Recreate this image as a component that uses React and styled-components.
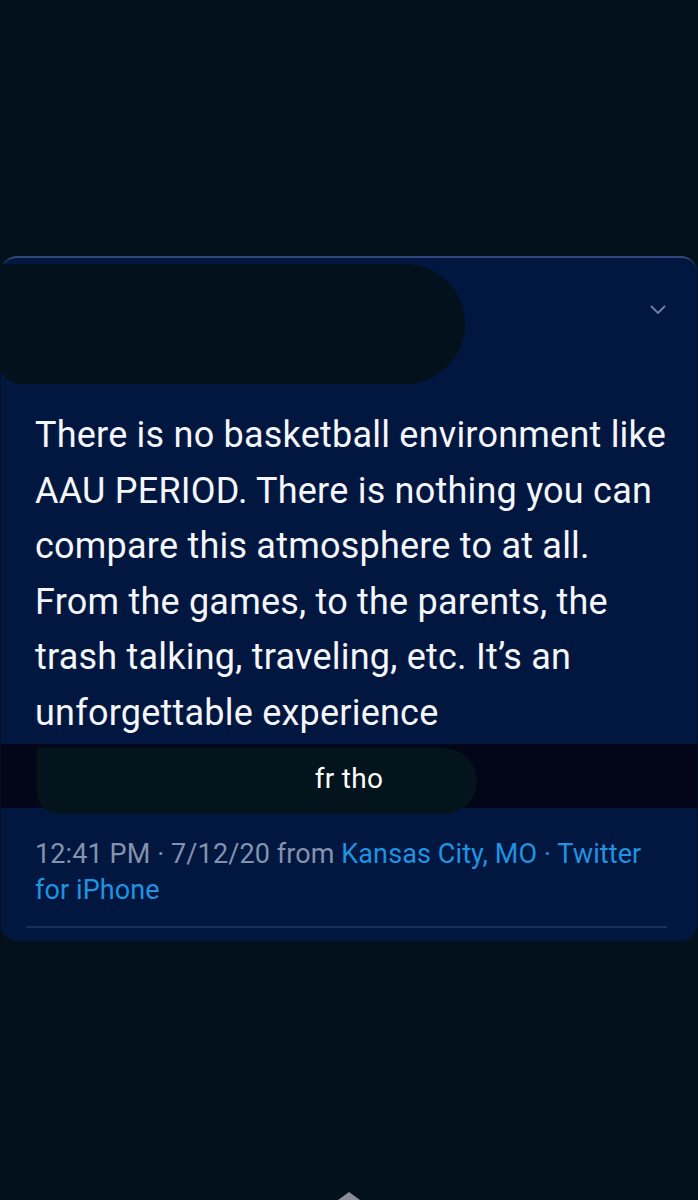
import React from "react";
import styled, { createGlobalStyle } from "styled-components";

const Global = createGlobalStyle`
	html, body {
		margin: 0;
		padding: 0;
		background: #02111c;
	}
	body {
		font-family: Roboto, "Liberation Sans", sans-serif;
	}
`;

const Page = styled.div`
	width: 698px;
	height: 1200px;
	background: #02111c;
	display: flex;
	flex-direction: column;
	align-items: center;
	overflow: hidden;
`;

const Card = styled.div`
	position: relative;
	margin-top: 256px;
	width: 696px;
	background: #011740;
	border-radius: 16px;
	border-top: 2px solid #34467e;
	display: flex;
	flex-direction: column;
	padding-bottom: 13px;
`;

const Header = styled.div`
	height: 114px;
	display: flex;
	justify-content: flex-end;
	align-items: flex-start;
	padding: 46px 30px 0 0;
	box-sizing: border-box;
`;

/* redaction scribble over the name */
const Blob = styled.div`
	position: absolute;
	background: ${(p) => p.tone || "#02111b"};
	left: ${(p) => p.left}px;
	top: ${(p) => p.top}px;
	width: ${(p) => p.w}px;
	height: ${(p) => p.h}px;
	border-radius: 0 ${(p) => p.h / 2}px ${(p) => p.h / 2}px 22px;
`;

const Body = styled.p`
	margin: 36px 0 0 34px;
	font-size: 36px;
	line-height: 55.5px;
	color: #f4f6fb;
	letter-spacing: 0.22px;
	white-space: nowrap;
`;

const Band = styled.div`
	position: relative;
	margin-top: 3px;
	height: 64px;
	background: #020618;
	display: flex;
	justify-content: center;
	align-items: center;
`;

const Caption = styled.span`
	position: relative;
	z-index: 2;
	font-size: 28px;
	color: #ffffff;
	margin-top: 4px;
	letter-spacing: 0.3px;
`;

const Meta = styled.p`
	margin: 28px 0 0 34px;
	font-size: 27px;
	line-height: 36px;
	color: #8493ad;
	letter-spacing: 0.1px;
`;

const Link = styled.span`
	color: #1f93e0;
`;

const Rule = styled.div`
	margin: 18px 30px 0 25px;
	height: 2px;
	background: #17305c;
`;

const Caret = styled.div`
	margin-top: auto;
	display: flex;
	justify-content: center;
`;

function Chevron() {
	return (
		<svg width="18" height="12" viewBox="0 0 18 12">
			<path d="M2 2 L9 9 L16 2" fill="none" stroke="#6e82ab" strokeWidth="1.8" />
		</svg>
	);
}

export default function App() {
	return (
		<Page>
			<Global />
			<Card>
				<Header>
					<Chevron />
				</Header>
				<Blob left={-2} top={6} w={466} h={120} />
				<Body>
					There is no basketball environment like
					<br />
					AAU PERIOD. There is nothing you can
					<br />
					compare this atmosphere to at all.
					<br />
					From the games, to the parents, the
					<br />
					trash talking, traveling, etc. It’s an
					<br />
					unforgettable experience
				</Body>
				<Band>
					<Blob left={36} top={4} w={440} h={66} tone="#03141c" />
					<Caption>fr tho</Caption>
				</Band>
				<Meta>
					12:41 PM · 7/12/20 from <Link>Kansas City, MO · Twitter</Link>
					<br />
					<Link>for iPhone</Link>
				</Meta>
				<Rule />
			</Card>
			<Caret>
				<svg width="26" height="10" viewBox="0 0 26 10">
					<path d="M2 10 L13 2 L24 10 Z" fill="#8a8f99" />
				</svg>
			</Caret>
		</Page>
	);
}
